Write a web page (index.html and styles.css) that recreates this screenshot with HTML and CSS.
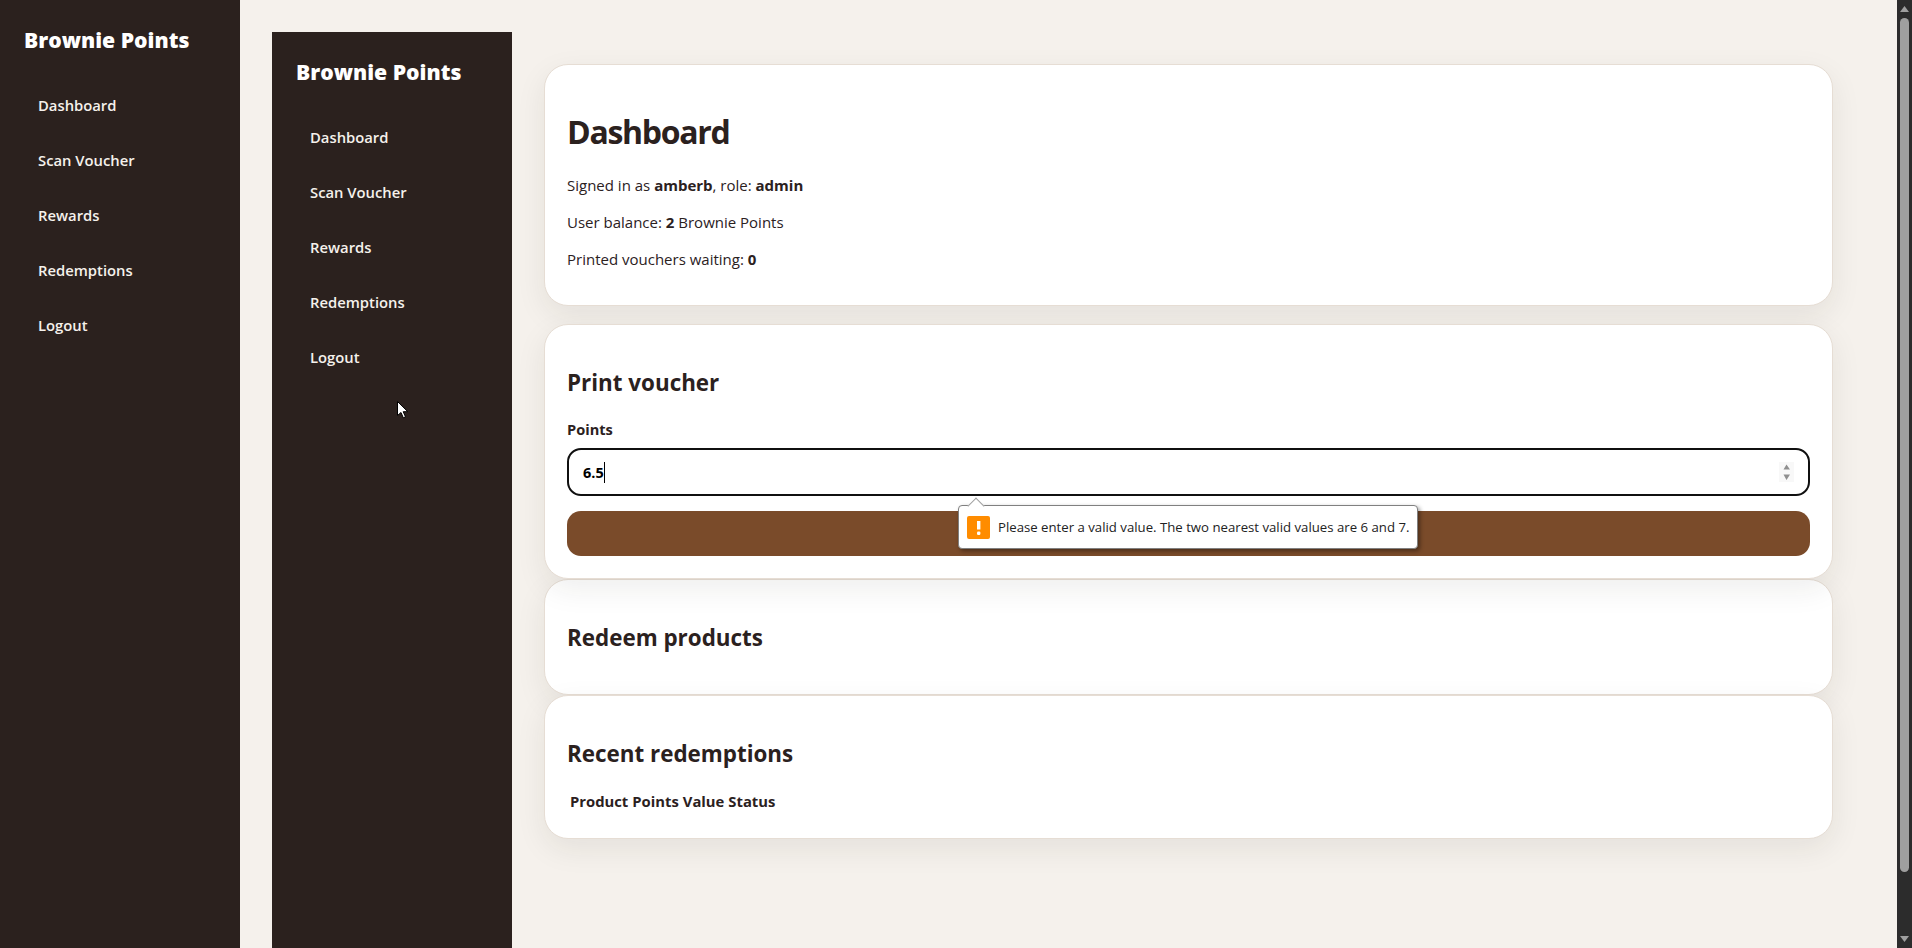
FILE: index.html
```html
<!DOCTYPE html>
<html lang="en">
<head>
    <meta charset="UTF-8">
    <meta name="viewport" content="width=device-width, initial-scale=1.0">
    <title>Brownie Points</title>
    <link rel="stylesheet" href="styles.css">
</head>
<body>
    <div class="page">
        <div class="layout">
            <aside class="sidebar">
                <div class="brand">Brownie Points</div>
                <nav class="nav">
                    <a href="#">Dashboard</a>
                    <a href="#">Scan Voucher</a>
                    <a href="#">Rewards</a>
                    <a href="#">Redemptions</a>
                    <a href="#">Logout</a>
                </nav>
            </aside>
            <main class="main">
                <div class="layout">
                    <aside class="sidebar">
                        <div class="brand">Brownie Points</div>
                        <nav class="nav">
                            <a href="#">Dashboard</a>
                            <a href="#">Scan Voucher</a>
                            <a href="#">Rewards</a>
                            <a href="#">Redemptions</a>
                            <a href="#">Logout</a>
                        </nav>
                    </aside>
                    <main class="main">
                        <section class="card card-intro">
                            <h1>Dashboard</h1>
                            <p>Signed in as <strong>amberb</strong>, role: <strong>admin</strong></p>
                            <p>User balance: <strong>2</strong> Brownie Points</p>
                            <p>Printed vouchers waiting: <strong>0</strong></p>
                        </section>
                        <section class="card card-focus">
                            <h2>Print voucher</h2>
                            <form class="voucher-form">
                                <div class="field-label">Points</div>
                                <div class="field-wrap">
                                    <div class="field">
                                        <span class="field-value">6.5</span>
                                        <span class="caret"></span>
                                        <span class="spinner">
                                            <svg width="15" height="20" viewBox="0 0 15 20"><path d="M4.5 7.5 L7.5 2.5 L11 7.5 Z M4.5 12.5 L11 12.5 L7.5 18 Z" fill="#8f8f8f"/></svg>
                                        </span>
                                    </div>
                                    <div class="tooltip">
                                        <span class="tooltip-arrow"></span>
                                        <svg class="warn-icon" width="23" height="23" viewBox="0 0 23 23"><rect width="23" height="23" rx="2" fill="#ff8c00"/><rect x="10" y="5" width="3.4" height="8.5" fill="#fff"/><rect x="10" y="15.6" width="3.4" height="3.4" rx="1.2" fill="#fff"/></svg>
                                        <span>Please enter a valid value. The two nearest valid values are 6 and 7.</span>
                                    </div>
                                </div>
                                <button type="button" class="print-button" aria-label="Print"></button>
                            </form>
                        </section>
                        <section class="card">
                            <h2>Redeem products</h2>
                        </section>
                        <section class="card">
                            <h2>Recent redemptions</h2>
                            <table class="redemptions">
                                <thead>
                                    <tr><th>Product</th><th>Points</th><th>Value</th><th>Status</th></tr>
                                </thead>
                            </table>
                        </section>
                    </main>
                </div>
            </main>
        </div>
    </div>

    <div class="scrollbar">
        <svg class="scroll-arrow" width="9" height="6" viewBox="0 0 9 6"><path d="M4.5 0 L9 6 L0 6 Z" fill="#9f9f9f"/></svg>
        <div class="scroll-thumb"></div>
        <svg class="scroll-arrow scroll-arrow-down" width="9" height="6" viewBox="0 0 9 6"><path d="M0 0 L9 0 L4.5 6 Z" fill="#9f9f9f"/></svg>
    </div>

    <svg class="cursor" width="12" height="18" viewBox="0 0 12 18"><path d="M0.5 0.5 L0.5 14.5 L4 11.5 L6.3 16.8 L8.5 15.8 L6.2 10.7 L10.8 10.7 Z" fill="#fff" stroke="#000" stroke-width="1"/></svg>
</body>
</html>
```

FILE: styles.css
```css
html, body {
    height: 100%;
    overflow: hidden;
}
body {
    font-family: "Open Sans", Arial, sans-serif;
    font-size: 15px;
    margin: 0;
    padding: 0;
    color: #2b211e;
    background-color: #f5f1ec;
    display: flex;
}
.page {
    flex: 1;
    min-width: 0;
}
.layout {
    display: flex;
    min-height: 100vh;
}
.sidebar {
    width: 240px;
    flex-shrink: 0;
    box-sizing: border-box;
    padding: 24px;
    background-color: #2b211e;
    color: #fff;
}
.brand {
    font-size: 21.2px;
    font-weight: 800;
    line-height: 32px;
    margin-bottom: 22px;
}
.nav {
    display: flex;
    flex-direction: column;
}
.nav a {
    color: #f5f1ec;
    font-weight: 600;
    font-size: 14.8px;
    text-decoration: none;
    padding: 16px 14px;
    line-height: 23px;
}
.main {
    flex: 1;
    min-width: 0;
    padding: 32px;
}
.card {
    background-color: #fff;
    border: 1px solid #e6ddd4;
    border-radius: 24px;
    padding: 22px;
    box-shadow: 0 10px 30px rgba(43, 33, 30, 0.08);
}
.card-intro {
    margin-bottom: 18px;
    padding-bottom: 20px;
}
.card-focus {
    position: relative;
    z-index: 1;
}
h1 {
    font-size: 32px;
    letter-spacing: -1.3px;
    line-height: 40px;
    margin: 25px 0 22px;
}
h2 {
    font-size: 22.4px;
    line-height: 30px;
    margin: 21px 0 19px;
}
p {
    line-height: 22px;
    margin: 15px 0;
}
.field-label {
    font-weight: 700;
    font-size: 14.6px;
    line-height: 25px;
}
.field-wrap {
    position: relative;
    margin-top: 6px;
}
.field {
    display: flex;
    align-items: center;
    height: 48px;
    box-sizing: border-box;
    padding: 0 14px;
    border: 2px solid #101010;
    border-radius: 14px;
    background-color: #fff;
    color: #000;
    font-size: 14.5px;
    font-weight: 700;
}
.caret {
    width: 1px;
    height: 21px;
    background-color: #000;
}
.spinner {
    margin-left: auto;
    width: 15px;
    height: 20px;
    background-color: #f8f8f8;
}
.tooltip {
    position: absolute;
    left: 391px;
    top: 57px;
    display: flex;
    align-items: center;
    gap: 8px;
    box-sizing: border-box;
    height: 44px;
    padding: 0 8px;
    background-color: #fff;
    border: 1px solid #808080;
    border-radius: 4px;
    box-shadow: 2px 2px 4px rgba(0, 0, 0, 0.4);
    color: #222;
    font-size: 13.2px;
    white-space: nowrap;
    z-index: 2;
}
.tooltip-arrow {
    position: absolute;
    left: 11px;
    top: -6px;
    width: 11px;
    height: 11px;
    background-color: #fff;
    border-top: 1px solid #a0a0a0;
    border-left: 1px solid #a0a0a0;
    transform: rotate(45deg);
}
.warn-icon {
    flex-shrink: 0;
}
.print-button {
    display: block;
    width: 100%;
    height: 45px;
    margin-top: 15px;
    border: none;
    border-radius: 14px;
    background-color: #7a4b2a;
}
.redemptions {
    font-size: 14.8px;
    margin-top: 2px;
    margin-bottom: 2px;
}
.redemptions th {
    font-weight: 700;
}
.scrollbar {
    width: 15px;
    flex-shrink: 0;
    background-color: #2c2c2c;
    display: flex;
    flex-direction: column;
    align-items: center;
    padding-top: 6px;
    box-sizing: border-box;
}
.scroll-thumb {
    width: 9px;
    height: 854px;
    margin-top: 6px;
    border-radius: 5px;
    background-color: #9f9f9f;
}
.scroll-arrow-down {
    margin-top: 64px;
}
.cursor {
    position: fixed;
    left: 397px;
    top: 401px;
}
```
